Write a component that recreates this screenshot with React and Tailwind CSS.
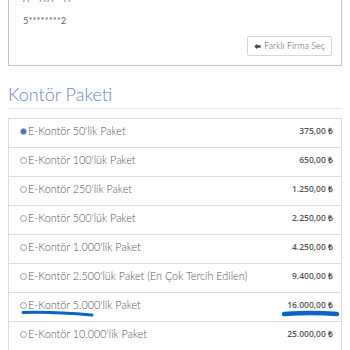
import React from 'react';

const paketler = [
  { ad: "E-Kontör 50'lik Paket", fiyat: '375,00 ₺', secili: true },
  { ad: "E-Kontör 100'lük Paket", fiyat: '650,00 ₺' },
  { ad: "E-Kontör 250'lik Paket", fiyat: '1.250,00 ₺' },
  { ad: "E-Kontör 500'lük Paket", fiyat: '2.250,00 ₺' },
  { ad: "E-Kontör 1.000'lik Paket", fiyat: '4.250,00 ₺' },
  { ad: "E-Kontör 2.500'lük Paket (En Çok Tercih Edilen)", fiyat: '9.400,00 ₺' },
  { ad: "E-Kontör 5.000'lik Paket", fiyat: '16.000,00 ₺', isaret: true },
  { ad: "E-Kontör 10.000'lik Paket", fiyat: '25.000,00 ₺' },
];

const Radio = ({ secili }) => (
  <span className="inline-flex h-[7px] w-[7px] shrink-0 items-center justify-center rounded-full border border-[#a0a0a0] bg-white">
    {secili && <span className="h-[5px] w-[5px] rounded-full bg-[#3a74d8]" />}
  </span>
);

export default function App() {
  return (
    <div className="h-[350px] w-[350px] overflow-hidden bg-white px-2 font-['Lato',sans-serif] text-[#555]">
      {/* firma kartı */}
      <div className="-mt-[8px] border border-[#b9c3dc] bg-white pb-[9px] pl-[14px] pr-[9px]">
        <div className="text-[9px] leading-[12px] text-[#777]">A***A A***A</div>
        <div className="mt-[10px] text-[9.5px] leading-[12px] text-[#666]">5********2</div>
        <div className="mt-[9px] flex justify-end">
          <button className="flex h-[20px] items-center gap-[3px] rounded-[2px] border border-[#d6d6d6] bg-white px-[6px] text-[9px] font-light text-[#555]">
            <svg width="7" height="7" viewBox="0 0 10 10">
              <path d="M0.5 5 L4.5 1 L4.5 3.3 L9.5 3.3 L9.5 6.7 L4.5 6.7 L4.5 9 Z" fill="#444" />
            </svg>
            Farklı Firma Seç
          </button>
        </div>
      </div>

      {/* başlık */}
      <h2 className="mt-[17px] text-[18px] font-light leading-[22px] text-[#6f86bd]">Kontör Paketi</h2>
      <div className="mt-[3px] border-t border-[#e6e6e6]" />

      {/* paket listesi */}
      <div className="mt-[9px] border-x border-t border-[#dedede]">
        {paketler.map((p, i) => (
          <div key={i} className="relative flex h-[29px] items-center border-b border-[#dedede] pb-[3px] pl-[11px] pr-[8px]">
            <Radio secili={p.secili} />
            <span className="ml-[1px] text-[10.8px] font-light text-[#555]">{p.ad}</span>
            <span className="ml-auto font-['Open_Sans',sans-serif] text-[8.5px] font-semibold text-[#555]">{p.fiyat}</span>
            {p.isaret && (
              <svg className="pointer-events-none absolute left-0 top-0" width="334" height="29" viewBox="0 0 334 29">
                <path d="M14 19.5 C30 19 60 20 83 22" stroke="#0b63c8" strokeWidth="3" strokeLinecap="round" fill="none" />
                <path d="M275 21 C290 20 315 20 328 21" stroke="#0b63c8" strokeWidth="4.5" strokeLinecap="round" fill="none" />
              </svg>
            )}
          </div>
        ))}
      </div>
    </div>
  );
}
